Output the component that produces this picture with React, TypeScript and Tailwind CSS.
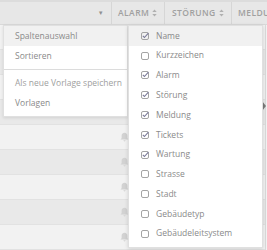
import React from 'react';

const font = { fontFamily: '"Open Sans", "Liberation Sans", sans-serif' };

function SortIcon() {
  return (
    <svg width="5" height="8" viewBox="0 0 5 8" className="text-[#b0b0b0]">
      <path d="M2.5 0.5 L4.7 3 H0.3 Z" fill="currentColor" />
      <path d="M2.5 7.5 L4.7 5 H0.3 Z" fill="currentColor" />
    </svg>
  );
}

function Bell() {
  return (
    <svg width="9" height="10" viewBox="0 0 10 11" className="text-[#d2d2d2]">
      <path d="M5 0.8c-2 0-3.2 1.5-3.2 3.4v2.6L0.6 8.4h8.8L8.2 6.8V4.2C8.2 2.3 7 0.8 5 0.8Z M3.8 9.2a1.2 1.2 0 0 0 2.4 0Z" fill="currentColor" />
    </svg>
  );
}

function CheckBox({ checked }: { checked: boolean }) {
  return (
    <svg width="8" height="8" viewBox="0 0 8 8" className="shrink-0">
      <rect x="0.5" y="0.5" width="7" height="7" rx="1.5" fill="none" stroke="#9a9a9a" strokeWidth="0.9" />
      {checked && <path d="M1.8 3.9 L3.4 5.5 L7.4 1.2" fill="none" stroke="#7a7a98" strokeWidth="1.1" />}
    </svg>
  );
}

const columns: [string, boolean][] = [
  ['Name', true],
  ['Kurzzeichen', false],
  ['Alarm', true],
  ['Störung', true],
  ['Meldung', true],
  ['Tickets', true],
  ['Wartung', true],
  ['Strasse', false],
  ['Stadt', false],
  ['Gebäudetyp', false],
  ['Gebäudeleitsystem', false],
];

export default function App() {
  const rows = Array.from({ length: 9 });
  return (
    <div className="relative w-[267px] h-[250px] overflow-hidden bg-[#f2f2f2]" style={font}>
      {/* Kopfzeile */}
      <div className="flex h-[25px] bg-[#e7e7e7] border-t-[2px] border-[#dcdcdc] border-b border-b-[#d9d9d9] text-[8.5px] font-semibold text-[#a0a0a0] tracking-[0.05em]">
        <div className="w-[112px] shrink-0 flex items-center justify-end pr-[7px] border-r border-[#d6d6d6]">
          <span className="text-[6px] text-[#909090]">▼</span>
        </div>
        <div className="w-[53px] shrink-0 flex items-center justify-between pl-[6px] pr-[7px] border-r border-[#d6d6d6]">
          <span>ALARM</span>
          <SortIcon />
        </div>
        <div className="w-[67px] shrink-0 flex items-center justify-between pl-[7px] pr-[7px] border-r border-[#d6d6d6]">
          <span>STÖRUNG</span>
          <SortIcon />
        </div>
        <div className="flex-1 min-w-0 overflow-hidden flex items-center pl-[6px] whitespace-nowrap">
          <span>MELDUNG</span>
        </div>
      </div>

      {/* Tabellenzeilen */}
      <div className="border-r border-[#dadada] w-[266px]">
        {rows.map((_, i) => (
          <div
            key={i}
            className={`h-[25px] flex items-center border-b border-[#e2e2e2] ${i % 2 === 0 ? 'bg-[#f2f2f2]' : 'bg-[#e9e9e9]'}`}
          >
            <div className="w-[129px] flex justify-end">
              <Bell />
            </div>
          </div>
        ))}
      </div>

      {/* Pfeil am Rand */}
      <div className="absolute left-[262px] top-[101px] w-0 h-0 border-y-[5px] border-y-transparent border-l-[4px] border-l-[#7a7a7a]" />

      {/* Kontextmenü */}
      <div className="absolute left-[3px] top-[25px] w-[125px] bg-white border border-[#e0e0e0] shadow-[0_1px_3px_rgba(0,0,0,0.1)] text-[8.5px] text-[#8a8a8a]">
        <div className="h-[20px] flex items-center pl-[11px] bg-[#f1f1f1]">Spaltenauswahl</div>
        <div className="h-[20px] flex items-center pl-[11px]">Sortieren</div>
        <div className="my-[3px] border-t border-[#dcdcdc]" />
        <div className="h-[20px] flex items-center pl-[11px] text-[#a0a0a0]">Als neue Vorlage speichern</div>
        <div className="h-[20px] flex items-center pl-[11px] mb-[3px]">Vorlagen</div>
      </div>

      {/* Untermenü Spaltenauswahl */}
      <div className="absolute left-[128px] top-[25px] w-[135px] bg-white border border-[#e0e0e0] shadow-[0_1px_4px_rgba(0,0,0,0.14)] text-[8.5px] text-[#8a8a8a] pb-[3px]">
        {columns.map(([label, checked], i) => (
          <div
            key={label}
            className={`h-[19.8px] flex items-center gap-[7px] pl-[12px] ${i === 0 ? 'bg-[#f1f1f1]' : ''}`}
          >
            <CheckBox checked={checked} />
            <span>{label}</span>
          </div>
        ))}
      </div>
    </div>
  );
}
